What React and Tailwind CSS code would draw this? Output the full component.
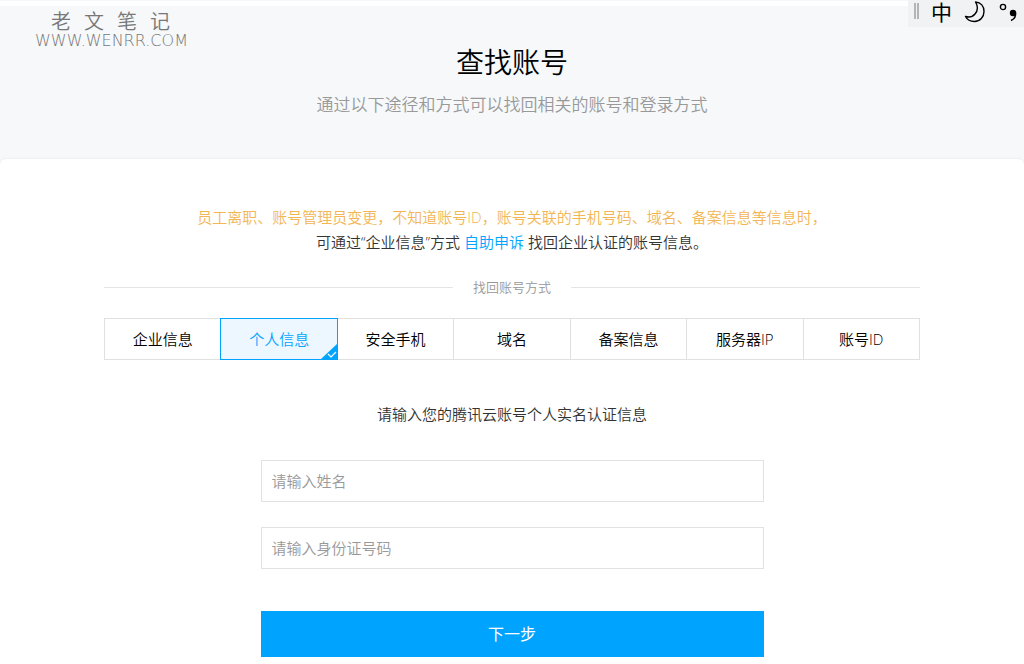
import React, { useState } from "react";

const tabs = [
  "企业信息",
  "个人信息",
  "安全手机",
  "域名",
  "备案信息",
  "服务器IP",
  "账号ID",
];

const SiteMark = () => (
  <div className="absolute left-[35px] top-[10px] text-[#777]">
    <div className="flex gap-[13px] pl-4 text-xl leading-6">
      <span>老</span>
      <span>文</span>
      <span>笔</span>
      <span>记</span>
    </div>
    <div className="font-['DejaVu_Sans','Noto_Sans_CJK_SC',sans-serif] text-base leading-[14px] font-extralight">
      WWW.WENRR.COM
    </div>
  </div>
);

const InputMethodBar = () => (
  <div className="absolute top-0 right-0 flex h-[27px] w-[116px] items-start bg-[#f1f2f3] pl-[6px] text-black">
    <span className="mt-[3px] h-4 w-[5px] border-x-2 border-[#b4b4b4]" />
    <button className="ml-3 font-['Noto_Sans_CJK_SC',sans-serif] text-[21px] leading-[22px] font-normal">
      中
    </button>
    <button aria-label="半角" className="ml-3">
      <svg width="22" height="24" viewBox="0 0 22 24" fill="none">
        <path
          d="M11.5 2C17 2.500 20 6.500 20 11.500C20 17 16 21.500 10.500 21.500C6 21.500 3 19.500 1.500 16.500C5 17.500 8.500 17 11 14C14 10.500 14 6 11.500 2Z"
          stroke="currentColor"
          strokeWidth="1.4"
          strokeLinejoin="round"
        />
      </svg>
    </button>
    <button aria-label="中文标点" className="ml-[13px]">
      <svg width="19" height="24" viewBox="0 0 19 24" fill="none">
        <circle cx="4" cy="7" r="2.6" stroke="currentColor" strokeWidth="1.4" />
        <circle cx="14" cy="13" r="3.200" fill="currentColor" />
        <path
          d="M16.400 12.500C17 16 15.500 19 12 20.500"
          stroke="currentColor"
          strokeWidth="1.6"
        />
      </svg>
    </button>
  </div>
);

const App = () => {
  const [active, setActive] = useState(1);
  const [name, setName] = useState("");
  const [idNumber, setIdNumber] = useState("");

  return (
    <div className="relative min-h-screen bg-white font-['Open_Sans','Noto_Sans_CJK_SC',sans-serif] font-[350]">
      <div className="h-[6px] border-t border-[#f6f7f8]" />
      <header className="bg-[#f6f8fa] pt-[34px] pb-12 text-center">
        <h1 className="text-[28px] leading-[44px] font-[350] text-black">
          查找账号
        </h1>
        <p className="mt-[9px] text-[17px] leading-6 text-[#999]">
          通过以下途径和方式可以找回相关的账号和登录方式
        </p>
      </header>
      <SiteMark />
      <InputMethodBar />

      <main className="relative -mt-[6px] rounded-t-md bg-white px-6 pt-[46px] text-[15px] shadow-[0_-1px_2px_rgba(0,0,0,0.04)]">
        <div className="mx-auto max-w-[816px]">
          <div className="text-center leading-[25px] text-[#333]">
            <p className="text-[#f2b654]">
              员工离职、账号管理员变更，不知道账号ID，账号关联的手机号码、域名、备案信息等信息时，
            </p>
            <p>
              可通过“企业信息”方式{" "}
              <a href="#appeal" className="text-[#00a4ff]">
                自助申诉
              </a>{" "}
              找回企业认证的账号信息。
            </p>
          </div>

          <div className="mt-[22px] flex items-center gap-5 text-[13px] leading-5 text-[#999]">
            <span className="h-px flex-1 bg-[#e5e5e5]" />
            找回账号方式
            <span className="h-px flex-1 bg-[#e5e5e5]" />
          </div>

          <div className="mt-[21px] grid grid-cols-7 border-l border-[#e0e0e0]">
            {tabs.map((tab, i) => (
              <button
                key={tab}
                onClick={() => setActive(i)}
                className={
                  i === active
                    ? "relative -ml-px h-[42px] border border-[#00a4ff] bg-[#edf7ff] text-[#00a4ff]"
                    : "h-[42px] border-y border-r border-[#e0e0e0] text-black"
                }
              >
                {tab}
                {i === active && (
                  <svg
                    className="absolute right-0 bottom-0"
                    width="16"
                    height="15"
                    viewBox="0 0 16 15"
                    fill="none"
                  >
                    <path d="M16 0V15H0Z" fill="#00a4ff" />
                    <path d="M7 10L10 13L15 8" stroke="#fff" strokeWidth="1.2" />
                  </svg>
                )}
              </button>
            ))}
          </div>
        </div>

        <form
          className="mx-auto mt-[42px] max-w-[503px]"
          onSubmit={(e) => e.preventDefault()}
        >
          <p className="text-center leading-6 text-[#333]">
            请输入您的腾讯云账号个人实名认证信息
          </p>
          <input
            type="text"
            aria-label="姓名"
            placeholder="请输入姓名"
            value={name}
            onChange={(e) => setName(e.target.value)}
            className="mt-[34px] block h-[42px] w-full border border-[#e2e2e2] px-[10px] text-[#333] placeholder:text-[#999]"
          />
          <input
            type="text"
            aria-label="身份证号码"
            placeholder="请输入身份证号码"
            value={idNumber}
            onChange={(e) => setIdNumber(e.target.value)}
            className="mt-[25px] block h-[42px] w-full border border-[#e2e2e2] px-[10px] text-[#333] placeholder:text-[#999]"
          />
          <button
            type="submit"
            className="mt-[42px] block h-[46px] w-full bg-[#00a4ff] text-base font-normal text-white"
          >
            下一步
          </button>
        </form>
      </main>
    </div>
  );
};

export default App;
